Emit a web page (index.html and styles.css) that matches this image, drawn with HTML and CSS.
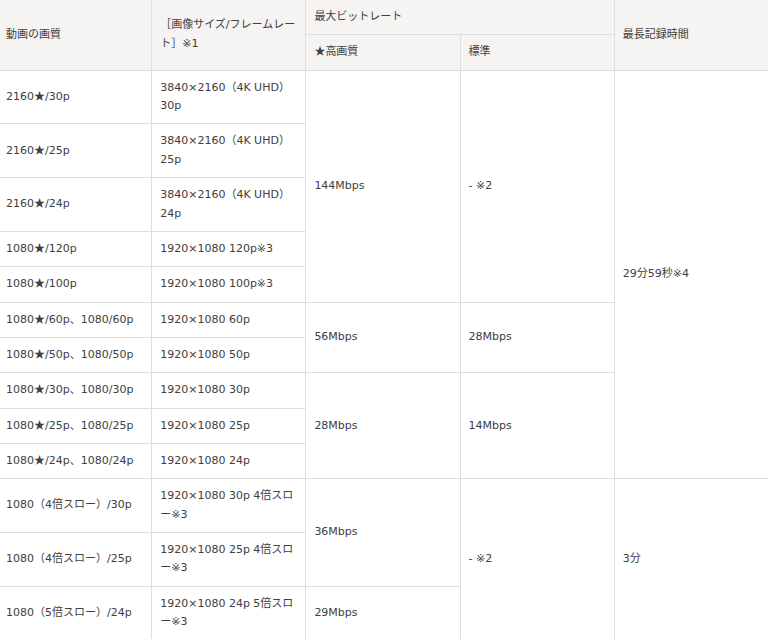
FILE: index.html
```html
<!DOCTYPE html>
<html lang="ja">
<head>
<meta charset="utf-8">
<title>動画の画質</title>
<link rel="stylesheet" href="styles.css">
</head>
<body>
<table class="spec">
  <colgroup>
    <col class="c"><col class="c"><col class="c"><col class="c"><col class="c">
  </colgroup>
  <thead>
    <tr>
      <th rowspan="2">動画の画質</th>
      <th rowspan="2">［画像サイズ/フレームレート］※1</th>
      <th colspan="2">最大ビットレート</th>
      <th rowspan="2">最長記録時間</th>
    </tr>
    <tr>
      <th><span class="star">★</span>高画質</th>
      <th>標準</th>
    </tr>
  </thead>
  <tbody>
    <tr>
      <td>2160<span class="star">★</span>/30p</td>
      <td>3840×2160（4K UHD）30p</td>
      <td rowspan="5">144Mbps</td>
      <td rowspan="5">- ※2</td>
      <td rowspan="10">29分59秒※4</td>
    </tr>
    <tr><td>2160<span class="star">★</span>/25p</td><td>3840×2160（4K UHD）25p</td></tr>
    <tr><td>2160<span class="star">★</span>/24p</td><td>3840×2160（4K UHD）24p</td></tr>
    <tr><td>1080<span class="star">★</span>/120p</td><td>1920×1080 120p※3</td></tr>
    <tr><td>1080<span class="star">★</span>/100p</td><td>1920×1080 100p※3</td></tr>
    <tr>
      <td>1080<span class="star">★</span>/60p、1080/60p</td>
      <td>1920×1080 60p</td>
      <td rowspan="2">56Mbps</td>
      <td rowspan="2">28Mbps</td>
    </tr>
    <tr><td>1080<span class="star">★</span>/50p、1080/50p</td><td>1920×1080 50p</td></tr>
    <tr>
      <td>1080<span class="star">★</span>/30p、1080/30p</td>
      <td>1920×1080 30p</td>
      <td rowspan="3">28Mbps</td>
      <td rowspan="3">14Mbps</td>
    </tr>
    <tr><td>1080<span class="star">★</span>/25p、1080/25p</td><td>1920×1080 25p</td></tr>
    <tr><td>1080<span class="star">★</span>/24p、1080/24p</td><td>1920×1080 24p</td></tr>
    <tr>
      <td>1080（4倍スロー）/30p</td>
      <td>1920×1080 30p 4倍スロー※3</td>
      <td rowspan="2">36Mbps</td>
      <td rowspan="3">- ※2</td>
      <td rowspan="3">3分</td>
    </tr>
    <tr><td>1080（4倍スロー）/25p</td><td>1920×1080 25p 4倍スロー※3</td></tr>
    <tr><td>1080（5倍スロー）/24p</td><td>1920×1080 24p 5倍スロー※3</td><td>29Mbps</td></tr>
  </tbody>
</table>
</body>
</html>
```
FILE: styles.css
```css
html, body {
  margin: 0;
  padding: 0;
  background: #fff;
}

body {
  font-family: "DejaVu Sans", "Noto Sans CJK JP", sans-serif;
  font-size: 11px;
  color: #404040;
}

.spec {
  border-collapse: collapse;
  table-layout: fixed;
  width: 772px;
  margin: -1px 0 0 -3px;
}

.spec .c {
  width: 20%;
}

.spec th,
.spec td {
  border: 1px solid #dedede;
  padding: 7.92px 8px;
  line-height: 18.5px;
  text-align: left;
  vertical-align: middle;
  font-weight: normal;
}

.spec th {
  background: #f5f4f2;
}

.star {
  font-family: "Noto Sans CJK JP", sans-serif;
  line-height: 1;
}
```
